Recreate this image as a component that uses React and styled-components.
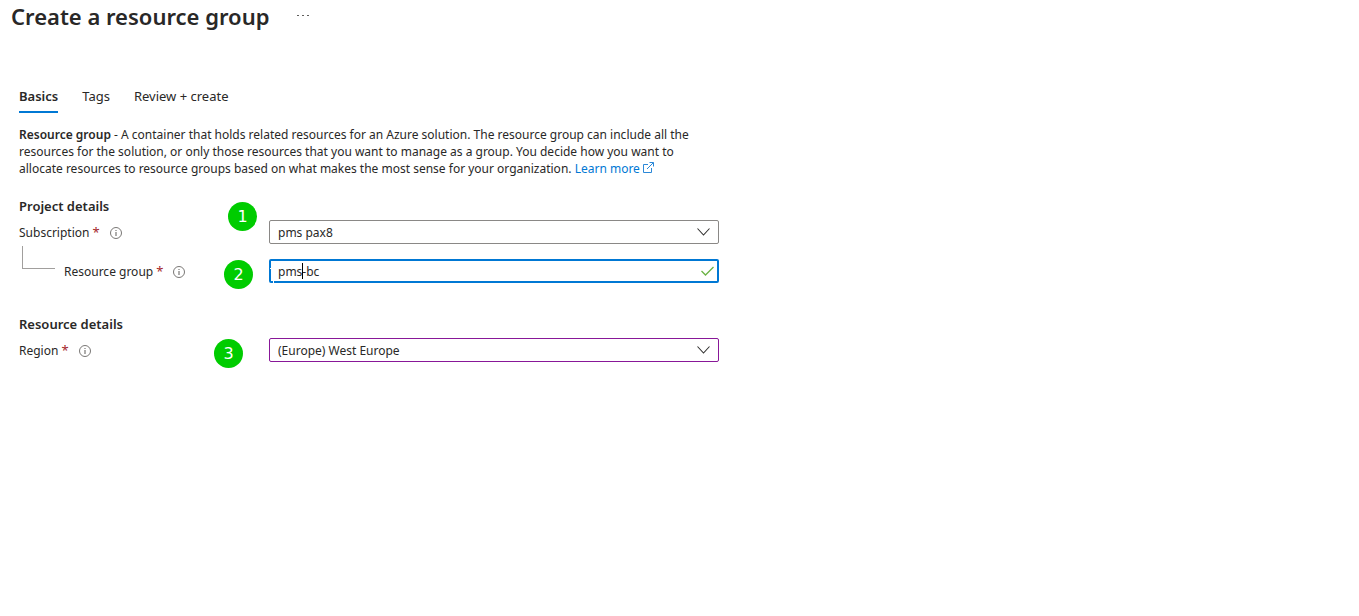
import styled, { createGlobalStyle } from "styled-components";
import { useState } from "react";

const TABS = ["Basics", "Tags", "Review + create"];

// Small circled "i" beside a label
const InfoIcon = () => (
    <svg width="12" height="12" viewBox="0 0 12 12" fill="none" stroke="#797775">
        <circle cx="6" cy="6" r="5.5"/>
        <path d="M6 5v4M6 3v1" strokeWidth="1.2"/>
    </svg>
);

const ExternalIcon = () => (
    <svg width="11" height="11" viewBox="0 0 11 11" fill="none" stroke="#2b88d8">
        <path d="M5 2.5H.5v8h8V6M4 7l6.3-6.3M6.5.5h4v4"/>
    </svg>
);

const ChevronIcon = () => (
    <svg width="14" height="8" viewBox="0 0 14 8" fill="none" stroke="#323130" strokeWidth="1.1">
        <path d="M.5 .5L6.5 7L12.5 .5"/>
    </svg>
);

const CheckIcon = () => (
    <svg width="13" height="10" viewBox="0 0 13 10" fill="none" stroke="#6bb344" strokeWidth="1.3">
        <path d="M.5 5L4.5 9L12.5 1"/>
    </svg>
);

// Label column of a form row
const FieldLabel = ({ id, children }) => (
    <>
        <Label htmlFor={id}>{children} <Required>*</Required></Label>
        <InfoButton type="button" aria-label={`About ${children}`}><InfoIcon/></InfoButton>
    </>
);

const App = () => {
    // State variables
    const [tab, setTab] = useState("Basics");
    const [group, setGroup] = useState("pms-bc");

    return (
        <Page>
            <GlobalStyle/>
            <Header>
                <Title>Create a resource group</Title>
                <MoreButton type="button" aria-label="More">
                    <svg width="12" height="2" viewBox="0 0 12 2" fill="#605e5c">
                        <path d="M0 0h2v1H0zM5 0h2v1H5zM10 0h2v1h-2z"/>
                    </svg>
                </MoreButton>
            </Header>
            <Content>
                <TabList role="tablist">
                    {TABS.map((name) => (
                        <Tab
                            key={name}
                            type="button"
                            role="tab"
                            aria-selected={tab === name}
                            $active={tab === name}
                            onClick={() => setTab(name)}
                        >
                            {name}
                        </Tab>
                    ))}
                </TabList>
                <Description>
                    <strong>Resource group</strong> - A container that holds related resources for an
                    Azure solution. The resource group can include all the resources for the
                    solution, or only those resources that you want to manage as a group. You decide
                    how you want to allocate resources to resource groups based on what makes the
                    most sense for your organization.{" "}
                    <Link href="#learn-more">Learn more <ExternalIcon/></Link>
                </Description>

                <Section>
                    <Heading>Project details</Heading>
                    <Row>
                        <LabelCell>
                            <FieldLabel id="subscription">Subscription</FieldLabel>
                            <Badge $left={209} $top={-18}>1</Badge>
                        </LabelCell>
                        <Field>
                            <Select id="subscription">
                                <option>pms pax8</option>
                            </Select>
                            <FieldIcon><ChevronIcon/></FieldIcon>
                        </Field>
                    </Row>
                    <Row>
                        <LabelCell>
                            <Branch/>
                            <FieldLabel id="group">Resource group</FieldLabel>
                            <Badge $left={205} $top={1}>2</Badge>
                        </LabelCell>
                        <Field>
                            <Input
                                id="group"
                                value={group}
                                onChange={(e) => setGroup(e.target.value)}
                            />
                            <Corner/>
                            <Caret aria-hidden="true">{group.slice(0, 3)}</Caret>
                            <FieldIcon $right={2}><CheckIcon/></FieldIcon>
                        </Field>
                    </Row>
                </Section>

                <Section>
                    <Heading>Resource details</Heading>
                    <Row>
                        <LabelCell>
                            <FieldLabel id="region">Region</FieldLabel>
                            <Badge $left={195} $top={1}>3</Badge>
                        </LabelCell>
                        <Field>
                            <Select id="region" $edited>
                                <option>(Europe) West Europe</option>
                            </Select>
                            <FieldIcon><ChevronIcon/></FieldIcon>
                        </Field>
                    </Row>
                </Section>
            </Content>
        </Page>
    )
}

const GlobalStyle = createGlobalStyle`
    * {
        box-sizing: border-box;
    }
    body {
        margin: 0;
        background-color: white;
        color: #292827;
        font-family: "Segoe UI", "Noto Sans", sans-serif;
        font-size: 12px;
        line-height: 17px;
    }
    button, input, select {
        font: inherit;
        color: inherit;
    }
`;

const Page = styled.main`
    min-height: 100vh;
`;

const Header = styled.header`
    display: flex;
    align-items: center;
    gap: 24px;
    padding-left: 11px;
`;

const Title = styled.h1`
    margin: 0;
    font-size: 22px;
    font-weight: 600;
    line-height: 32px;
`;

const MoreButton = styled.button`
    display: flex;
    padding: 4px;
    border: none;
    background: none;
`;

const Content = styled.div`
    max-width: 719px;
    padding: 52px 0 0 19px;
`;

const TabList = styled.div`
    display: flex;
    gap: 24px;
`;

const Tab = styled.button`
    padding: 4px 0 6px;
    border: none;
    border-bottom: 2px solid ${(props) => (props.$active ? "#0078d4" : "transparent")};
    background: none;
    font-size: 13px;
    font-weight: ${(props) => (props.$active ? 600 : 400)};
`;

const Description = styled.p`
    max-width: 688px;
    margin: 13px 0 0;

    strong {
        font-weight: 600;
    }
`;

const Link = styled.a`
    color: #0078d4;
    text-decoration: none;
`;

const Section = styled.section`
    display: flex;
    flex-direction: column;
    gap: 15px;
    margin-bottom: 33px;

    &:first-of-type {
        margin-top: 21px;
    }
`;

const Heading = styled.h2`
    margin: 0 0 -10px;
    font-size: 13px;
    font-weight: 600;
    line-height: 17px;
`;

const Row = styled.div`
    display: flex;
`;

// Left column, the label and its marker
const LabelCell = styled.div`
    position: relative;
    display: flex;
    align-items: center;
    flex: 0 0 250px;
    height: 24px;
`;

const Label = styled.label`
    white-space: nowrap;
`;

const Required = styled.span`
    color: #a4262c;
    font-size: 13px;
`;

const InfoButton = styled.button`
    display: flex;
    margin-left: 10px;
    padding: 1px 0 0;
    border: none;
    background: none;
`;

// Elbow line from the subscription down to the resource group
const Branch = styled.span`
    align-self: flex-start;
    width: 33px;
    height: 23px;
    margin: -13px 9px 0 3px;
    border-left: 1px solid #a19f9d;
    border-bottom: 1px solid #a19f9d;
`;

const Badge = styled.span`
    position: absolute;
    left: ${(props) => props.$left}px;
    top: ${(props) => props.$top}px;
    width: 29px;
    height: 29px;
    border-radius: 50%;
    background-color: #00cc00;
    color: white;
    font-family: "DejaVu Sans", sans-serif;
    font-size: 16px;
    line-height: 29px;
    text-align: center;
`;

const Field = styled.div`
    position: relative;
    display: flex;
    flex: 1;
    height: 24px;
`;

const Select = styled.select`
    appearance: none;
    width: 100%;
    padding: 0 28px 0 8px;
    border: 1px solid ${(props) => (props.$edited ? "#881798" : "#8a8886")};
    border-radius: 2px;
    background-color: white;
`;

const Input = styled.input`
    width: 100%;
    padding: 0 28px 0 7px;
    border: 2px solid #0078d4;
    border-radius: 2px;
    outline: none;
    background-color: white;
`;

// White hairline that cuts the lower left of the focus border
const Corner = styled.span`
    position: absolute;
    top: 9px;
    left: 1px;
    width: 4px;
    height: 15px;
    border-top: 1px solid white;
    border-right: 1px solid white;
    pointer-events: none;
`;

const Caret = styled.span`
    position: absolute;
    top: 4px;
    left: 9px;
    height: 16px;
    border-right: 1px solid black;
    color: transparent;
    pointer-events: none;
`;

const FieldIcon = styled.span`
    position: absolute;
    top: 0;
    right: ${(props) => props.$right ?? 5}px;
    display: flex;
    align-items: center;
    justify-content: center;
    width: 20px;
    height: 24px;
    pointer-events: none;
`;

export default App;
